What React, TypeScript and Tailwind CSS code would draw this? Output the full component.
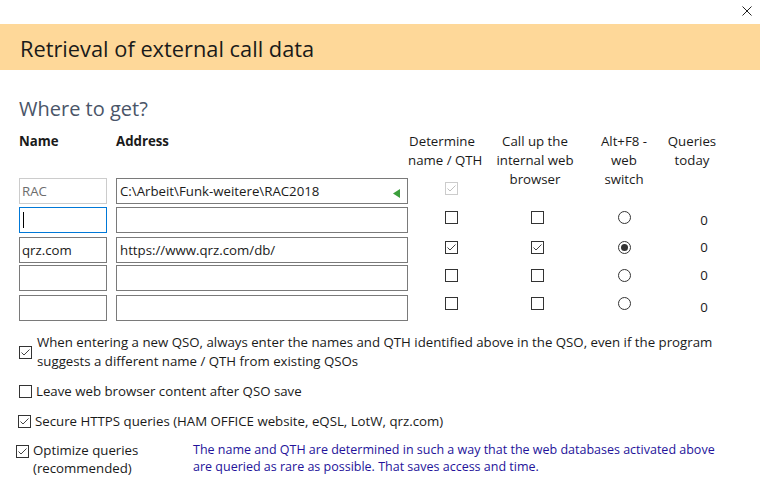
type Row = {
  name: string;
  address: string;
  nameState: 'disabled' | 'focused' | 'normal';
  det: boolean;
  web?: boolean;
  radio?: boolean;
  mt: string;
  boxMt: string;
  zeroMt?: string;
  arrow?: boolean;
};

const ROWS: Row[] = [
  { name: 'RAC', address: 'C:\\Arbeit\\Funk-weitere\\RAC2018', nameState: 'disabled', det: true, mt: 'mt-0', boxMt: 'mt-[4px]', arrow: true },
  { name: '', address: '', nameState: 'focused', det: false, web: false, radio: false, mt: 'mt-[3px]', boxMt: 'mt-[4px]', zeroMt: 'mt-[4px]' },
  { name: 'qrz.com', address: 'https://www.qrz.com/db/', nameState: 'normal', det: true, web: true, radio: true, mt: 'mt-[4px]', boxMt: 'mt-[4px]', zeroMt: 'mt-[1px]' },
  { name: '', address: '', nameState: 'normal', det: false, web: false, radio: false, mt: 'mt-[2px]', boxMt: 'mt-[4px]', zeroMt: 'mt-[1px]' },
  { name: '', address: '', nameState: 'normal', det: false, web: false, radio: false, mt: 'mt-[4px]', boxMt: 'mt-[2px]', zeroMt: 'mt-[3px]' },
];

function Check({ checked, disabled }: { checked: boolean; disabled?: boolean }) {
  return (
    <span
      className={
        'flex h-[13px] w-[13px] shrink-0 items-center justify-center border bg-white ' +
        (disabled ? 'border-[#cccccc]' : 'border-[#333333]')
      }
    >
      {checked && (
        <svg width="11" height="11" viewBox="0 0 11 11">
          <polyline
            points="1.5,5.5 4,8 9.5,2.5"
            fill="none"
            stroke={disabled ? '#bfbfbf' : '#444444'}
            strokeWidth="1"
          />
        </svg>
      )}
    </span>
  );
}

function Radio({ on }: { on: boolean }) {
  return (
    <span className="flex h-[13px] w-[13px] items-center justify-center rounded-full border border-[#333333] bg-white">
      {on && <span className="h-[7px] w-[7px] rounded-full bg-[#333333]" />}
    </span>
  );
}

export default function App() {
  return (
    <div
      className="relative h-[486px] w-[760px] overflow-hidden bg-white text-[13.25px] leading-[19px] text-[#1a1a1a]"
      style={{ fontFamily: "'Open Sans', 'Noto Sans', sans-serif" }}
    >
      <div className="flex h-[24px] justify-end pr-[8px] pt-[6px]">
        <svg width="10" height="10" viewBox="0 0 10 10">
          <path d="M0.5 0.5 L9.5 9.5 M9.5 0.5 L0.5 9.5" stroke="#222" strokeWidth="1" />
        </svg>
      </div>

      <div className="h-[46px] bg-[#fed899] pl-[20px] pt-[10px]">
        <div className="text-[21.8px] leading-[30px] text-[#1a1a1a]">Retrieval of external call data</div>
      </div>

      <div className="ml-[19px] mt-[25px] text-[20px] leading-[28px] text-[#4a5568]">Where to get?</div>

      <div className="ml-[19px] mt-[9px] flex h-[46px] whitespace-nowrap">
        <div className="w-[97px] font-bold">Name</div>
        <div className="w-[292px] font-bold">Address</div>
        <div className="w-[68px] text-center">Determine<br />name / QTH</div>
        <div className="w-[118px] text-center">Call up the<br />internal web<br />browser</div>
        <div className="w-[60px] text-center">Alt+F8 -<br />web<br />switch</div>
        <div className="w-[76px] text-center">Queries<br />today</div>
      </div>

      {ROWS.map((r, i) => (
        <div key={i} className={'ml-[19px] flex ' + r.mt}>
          <div
            className={
              'flex h-[26px] w-[88px] items-center border pl-[2px] ' +
              (r.nameState === 'disabled'
                ? 'border-[#cccccc] text-[#6d6d6d]'
                : r.nameState === 'focused'
                ? 'border-[#0078d7]'
                : 'border-[#7a7a7a]')
            }
          >
            {r.nameState === 'focused' ? <span className="ml-[1px] h-[16px] w-px bg-black" /> : r.name}
          </div>
          <div className="ml-[9px] flex h-[26px] w-[292px] items-center justify-between border border-[#7a7a7a] pl-[3px] pr-[7px]">
            <span className="whitespace-nowrap">{r.address}</span>
            {r.arrow && (
              <svg width="7" height="9" viewBox="0 0 7 9" className="mt-[4px]">
                <polygon points="7,0 7,9 0,4.5" fill="#3b9e3b" />
              </svg>
            )}
          </div>
          <div className={'flex w-[86px] justify-center ' + r.boxMt}>
            <div>
              <Check checked={r.det} disabled={r.nameState === 'disabled'} />
            </div>
          </div>
          {r.web !== undefined && (
            <>
              <div className={'flex w-[86px] justify-center ' + r.boxMt}>
                <div>
                  <Check checked={r.web} />
                </div>
              </div>
              <div className={'flex w-[89px] justify-center ' + r.boxMt}>
                <div>
                  <Radio on={!!r.radio} />
                </div>
              </div>
              <div className={'w-[70px] text-center ' + r.zeroMt}>0</div>
            </>
          )}
        </div>
      ))}

      <div className="ml-[19px] mt-[12px] flex items-center gap-[5px]">
        <Check checked />
        <div>
          When entering a new QSO, always enter the names and QTH identified above in the QSO, even if the program
          <br />
          suggests a different name / QTH from existing QSOs
        </div>
      </div>

      <div className="ml-[19px] mt-[11px] flex items-center gap-[4px]">
        <Check checked={false} />
        <div>Leave web browser content after QSO save</div>
      </div>

      <div className="ml-[18px] mt-[11px] flex items-center gap-[4px]">
        <Check checked />
        <div>Secure HTTPS queries (HAM OFFICE website, eQSL, LotW, qrz.com)</div>
      </div>

      <div className="ml-[16px] mt-[10px] flex">
        <div className="mt-[4px]">
          <Check checked />
        </div>
        <div className="ml-[4px] w-[160px] leading-[18px]">
          Optimize queries
          <br />
          (recommended)
        </div>
        <div className="text-[12.5px] leading-[17px] text-[#24139a]">
          The name and QTH are determined in such a way that the web databases activated above
          <br />
          are queried as rare as possible. That saves access and time.
        </div>
      </div>
    </div>
  );
}
